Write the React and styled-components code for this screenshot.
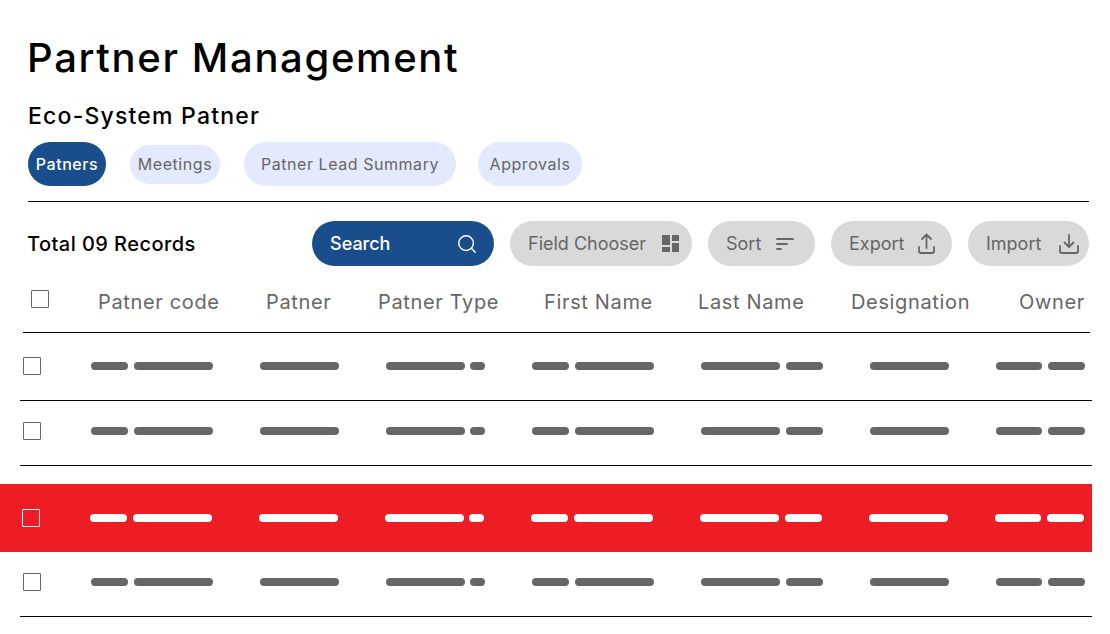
import React from "react";
import styled, { createGlobalStyle } from "styled-components";
import { Search } from "lucide-react";

const Global = createGlobalStyle`
  html, body { margin: 0; padding: 0; background: #fff; }
  body { font-family: Inter, "Open Sans", sans-serif; overflow: hidden; }
`;

const Page = styled.div`
  width: 1110px;
  height: 634px;
  overflow: hidden;
  box-sizing: border-box;
  padding-top: 33px;
`;
const Top = styled.div`
  padding: 0 21px 0 28px;
`;
const Title = styled.h1`
  margin: 0 0 0 -1px;
  font-size: 40px;
  line-height: 50px;
  font-weight: 500;
  color: #000;
  letter-spacing: 1.65px;
`;
const Subtitle = styled.h2`
  margin: 16px 0 0;
  font-size: 23px;
  line-height: 34px;
  font-weight: 500;
  color: #000;
  letter-spacing: 1.2px;
`;
const Tabs = styled.div`
  display: flex;
  align-items: center;
  height: 44px;
  margin-top: 9px;
`;
const Tab = styled.div`
  display: flex;
  align-items: center;
  justify-content: center;
  box-sizing: border-box;
  width: ${(p) => p.$w}px;
  height: ${(p) => p.$h || 44}px;
  margin-right: ${(p) => p.$gap}px;
  border-radius: 22px;
  font-size: 16px;
  letter-spacing: 0.55px;
  font-weight: ${(p) => (p.$active ? 500 : 400)};
  color: ${(p) => (p.$active ? "#fff" : "#666")};
  background: ${(p) => (p.$active ? "#1a4d8c" : "#e4eafd")};
`;
const Divider = styled.div`
  height: 1px;
  background: #000;
  margin-top: 15px;
`;
const Toolbar = styled.div`
  display: flex;
  align-items: center;
  height: 45px;
  margin-top: 19px;
  gap: 16px;
`;
const Total = styled.div`
  flex: 1;
  margin-left: -1px;
  font-size: 20px;
  font-weight: 500;
  color: #000;
  letter-spacing: 0.45px;
`;
const Pill = styled.div`
  display: flex;
  align-items: center;
  justify-content: space-between;
  box-sizing: border-box;
  width: ${(p) => p.$w}px;
  height: 45px;
  padding: 0 ${(p) => p.$pr}px 0 18px;
  border-radius: 23px;
  font-size: 18px;
  color: ${(p) => (p.$primary ? "#fff" : "#666")};
  background: ${(p) => (p.$primary ? "#1a4d8c" : "#d9d9d9")};
  font-weight: ${(p) => (p.$primary ? 500 : 400)};
`;
const Head = styled.div`
  display: grid;
  grid-template-columns: 75px 168px 112px 166px 154px 153px 168px 1fr;
  align-items: center;
  height: 66px;
  margin: 0 20px 0 23px;
  border-bottom: 1px solid #000;
`;
const HeadBox = styled.div`
  width: 18px;
  height: 18px;
  margin: -1px 0 0 8px;
  border: 1.5px solid #666;
  border-radius: 1px;
  box-sizing: border-box;
`;
const HeadCell = styled.div`
  font-size: 20px;
  color: #666;
  white-space: nowrap;
  letter-spacing: 0.65px;
  padding-top: 6px;
`;
const Row = styled.div`
  display: grid;
  grid-template-columns: 68px 169px 126px 146px 169px 169px 126px 1fr;
  align-items: center;
  height: ${(p) => p.$h}px;
  margin: 0 18px 0 20px;
  padding: 0 0 ${(p) => p.$pb}px 3px;
  box-sizing: border-box;
  border-bottom: 1px solid #000;
`;
const HotRow = styled(Row)`
  margin: 18px 18px 0 0;
  padding: 0 0 0 22px;
  height: 68px;
  border-bottom: 0;
  background: #ee1c25;
`;
const Check = styled.div`
  width: 18px;
  height: 18px;
  box-sizing: border-box;
  border: 1.5px solid ${(p) => (p.$hot ? "#fff" : "#666")};
  border-radius: 1px;
`;
const Bars = styled.div`
  display: flex;
  gap: ${(p) => p.$gap}px;
`;
const Bar = styled.div`
  width: ${(p) => p.$w}px;
  height: 8px;
  border-radius: 4px;
  background: ${(p) => (p.$hot ? "#fff" : "#666")};
`;

const columns = [
  { gap: 6, bars: [37, 79] },
  { gap: 6, bars: [79] },
  { gap: 5, bars: [79, 15] },
  { gap: 6, bars: [37, 79] },
  { gap: 6, bars: [79, 37] },
  { gap: 6, bars: [79] },
  { gap: 6, bars: [46, 37] },
];

const heads = ["Patner code", "Patner", "Patner Type", "First Name", "Last Name", "Designation", "Owner"];

const Cells = ({ hot }) => (
  <>
    <Check $hot={hot} />
    {columns.map((c, i) => (
      <Bars key={i} $gap={c.gap}>
        {c.bars.map((w, j) => (
          <Bar key={j} $w={w} $hot={hot} />
        ))}
      </Bars>
    ))}
  </>
);

const FieldIcon = () => (
  <svg width="17" height="17" viewBox="0 0 17 17" fill="#666">
    <rect x="0" y="0" width="8" height="10" />
    <rect x="10" y="0" width="7" height="6" />
    <rect x="0" y="12" width="8" height="5" />
    <rect x="10" y="8" width="7" height="9" />
  </svg>
);
const SortIcon = () => (
  <svg width="18" height="12" viewBox="0 0 18 12" fill="none" stroke="#666" strokeWidth="1.8" strokeLinecap="round">
    <path d="M1 1h16M1 6h10M1 11h4" />
  </svg>
);
const ExportIcon = () => (
  <svg width="17" height="21" viewBox="0 0 17 21" fill="none" stroke="#666" strokeWidth="1.8" strokeLinecap="round" strokeLinejoin="round">
    <path d="M1 14v4a2 2 0 0 0 2 2h11a2 2 0 0 0 2-2v-4" />
    <path d="M8.5 15V1.5M4 6l4.5-4.5L13 6" />
  </svg>
);
const ImportIcon = () => (
  <svg width="20" height="20" viewBox="0 0 20 20" fill="none" stroke="#666" strokeWidth="1.8" strokeLinecap="round" strokeLinejoin="round">
    <path d="M1 12v5a2 2 0 0 0 2 2h14a2 2 0 0 0 2-2v-5" />
    <path d="M10 1v12M5.5 8.5L10 13l4.5-4.5" />
  </svg>
);

export default function App() {
  return (
    <Page>
      <Global />
      <Top>
        <Title>Partner Management</Title>
        <Subtitle>Eco-System Patner</Subtitle>
        <Tabs>
          <Tab $active $w={78} $gap={24}>Patners</Tab>
          <Tab $w={90} $h={39} $gap={24}>Meetings</Tab>
          <Tab $w={212} $gap={22}>Patner Lead Summary</Tab>
          <Tab $w={104} $gap={0}>Approvals</Tab>
        </Tabs>
        <Divider />
        <Toolbar>
          <Total>Total 09 Records</Total>
          <Pill $primary $w={182} $pr={16}>
            Search
            <Search size={22} color="#fff" strokeWidth={1.6} />
          </Pill>
          <Pill $w={182} $pr={13}>
            Field Chooser
            <FieldIcon />
          </Pill>
          <Pill $w={107} $pr={21}>
            Sort
            <SortIcon />
          </Pill>
          <Pill $w={121} $pr={17}>
            Export
            <ExportIcon />
          </Pill>
          <Pill $w={121} $pr={10}>
            Import
            <ImportIcon />
          </Pill>
        </Toolbar>
      </Top>
      <Head>
        <HeadBox />
        {heads.map((t) => (
          <HeadCell key={t}>{t}</HeadCell>
        ))}
      </Head>
      <Row $h={68} $pb={2}><Cells /></Row>
      <Row $h={65} $pb={4}><Cells /></Row>
      <HotRow><Cells hot /></HotRow>
      <Row $h={65} $pb={4}><Cells /></Row>
    </Page>
  );
}
